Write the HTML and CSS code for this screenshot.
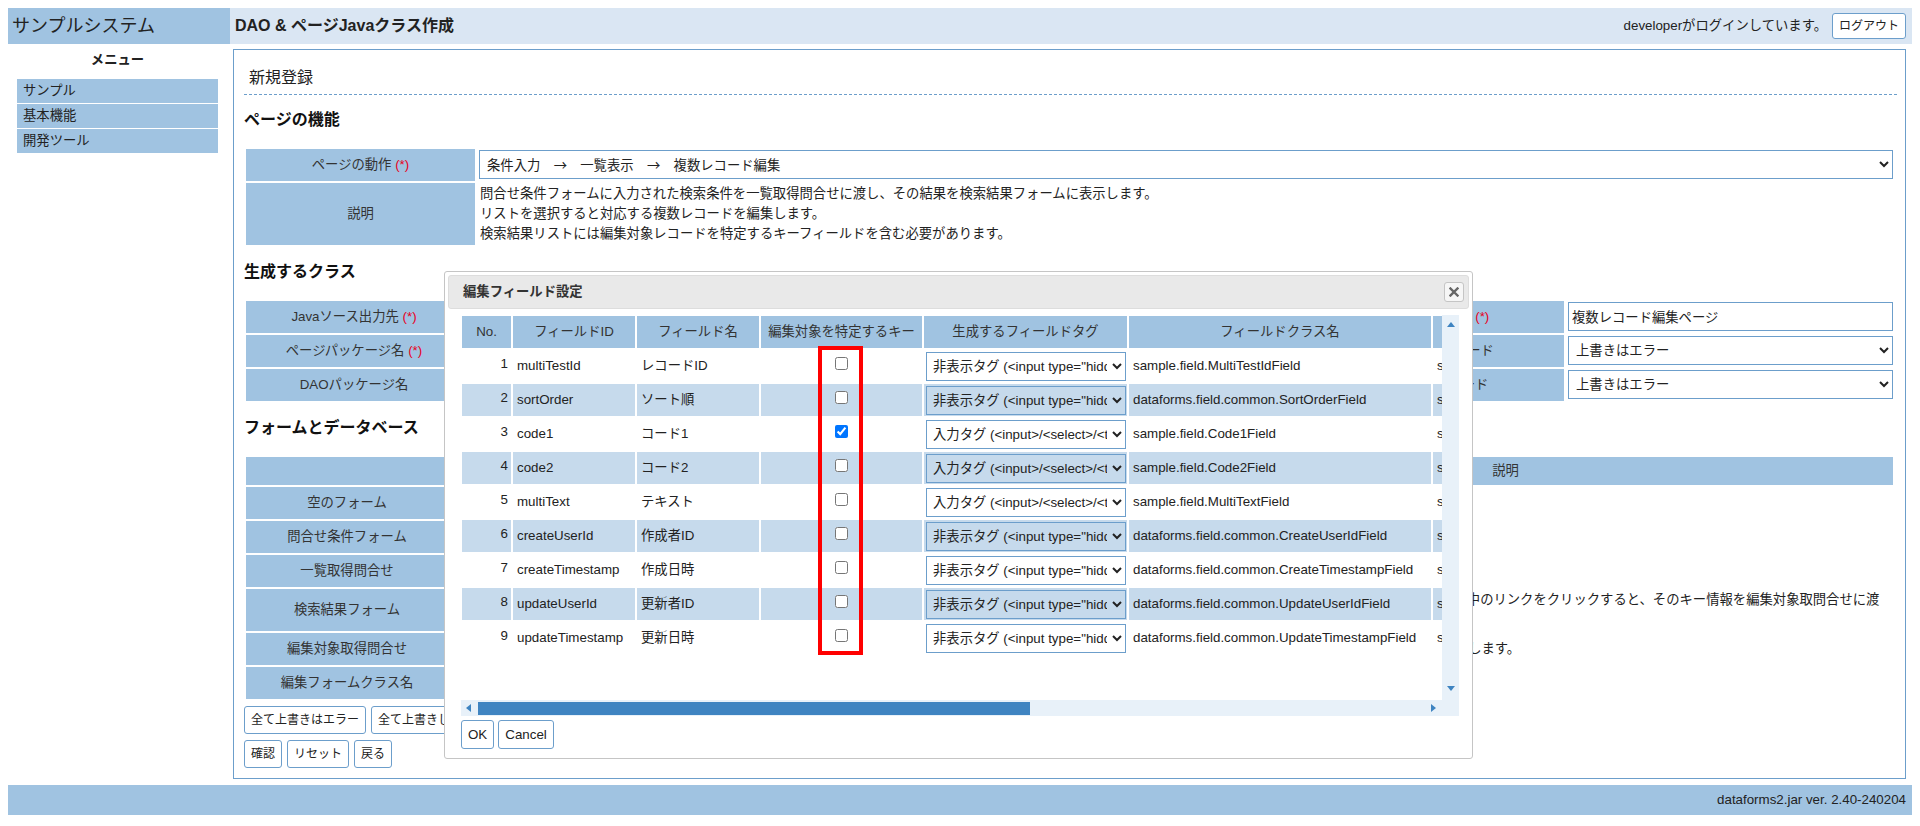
FILE: index.html
```html
<!DOCTYPE html>
<html lang="ja">
<head>
<meta charset="utf-8">
<title>DAO &amp; ページJavaクラス作成</title>
<link rel="stylesheet" href="styles.css">
</head>
<body>
<header class="top">
  <div class="sys">サンプルシステム</div>
  <div class="bar">
    <div class="page-title">DAO &amp; ページJavaクラス作成</div>
    <div class="login"><span>developerがログインしています。</span><button class="btn btn-logout">ログアウト</button></div>
  </div>
</header>

<div class="layout">
  <nav class="side">
    <div class="menu-title">メニュー</div>
    <ul class="menu">
      <li>サンプル</li>
      <li>基本機能</li>
      <li>開発ツール</li>
    </ul>
  </nav>

  <main class="main">
    <div class="form-title">新規登録</div>

    <h2>ページの機能</h2>
    <table class="ft t1">
      <colgroup><col class="w229"><col></colgroup>
      <tr>
        <th>ページの動作 <span class="req">(*)</span></th>
        <td class="v"><select class="sel sel-jp"><option>条件入力　→　一覧表示　→　複数レコード編集</option></select></td>
      </tr>
      <tr>
        <th>説明</th>
        <td class="txt">問合せ条件フォームに入力された検索条件を一覧取得問合せに渡し、その結果を検索結果フォームに表示します。<br>リストを選択すると対応する複数レコードを編集します。<br>検索結果リストには編集対象レコードを特定するキーフィールドを含む必要があります。</td>
      </tr>
    </table>

    <h2>生成するクラス</h2>
    <table class="ft t2">
      <colgroup><col class="w216"><col><col class="w260"><col class="w327"></colgroup>
      <tr>
        <th>Javaソース出力先 <span class="req">(*)</span></th>
        <td class="v"><input class="inp" type="text" value="C:/Users/developer/workspace/sample/src"></td>
        <th>ページクラス名 <span class="req">(*)</span></th>
        <td class="v"><input class="inp" type="text" value="複数レコード編集ページ"></td>
      </tr>
      <tr>
        <th>ページパッケージ名 <span class="req">(*)</span></th>
        <td class="v"><input class="inp" type="text" value="sample.page"></td>
        <th>ページ上書きモード</th>
        <td class="v"><select class="sel"><option>上書きはエラー</option></select></td>
      </tr>
      <tr>
        <th>DAOパッケージ名</th>
        <td class="v"><input class="inp" type="text" value="sample.dao"></td>
        <th>DAO上書きモード</th>
        <td class="v"><select class="sel"><option>上書きはエラー</option></select></td>
      </tr>
    </table>

    <h2>フォームとデータベース</h2>
    <table class="ft t3">
      <colgroup><col class="w202"><col class="w330"><col class="w334"><col></colgroup>
      <tr class="hd">
        <th></th><th>クラス名</th><th>テーブル</th><th>説明</th>
      </tr>
      <tr>
        <th>空のフォーム</th>
        <td class="v"><input class="inp" type="text" value=""></td>
        <td class="v"><input class="inp" type="text" value=""></td>
        <td class="desc">何も配置されていないフォームです。</td>
      </tr>
      <tr>
        <th>問合せ条件フォーム</th>
        <td class="v"><input class="inp" type="text" value="QueryForm"></td>
        <td class="v"><input class="inp" type="text" value=""></td>
        <td class="desc">問合せ条件を入力するフォームです。</td>
      </tr>
      <tr>
        <th>一覧取得問合せ</th>
        <td class="v"><input class="inp" type="text" value="MultiTestListQuery"></td>
        <td class="v"><input class="inp" type="text" value="multi_test"></td>
        <td class="desc">検索結果の一覧を取得する問合せです。</td>
      </tr>
      <tr>
        <th>検索結果フォーム</th>
        <td class="v"><input class="inp" type="text" value="QueryResultForm"></td>
        <td class="v"><input class="inp" type="text" value=""></td>
        <td class="desc">検索結果リストを表示するフォームです。検索結果リスト中のリンクをクリックすると、そのキー情報を編集対象取問合せに渡<br>します。</td>
      </tr>
      <tr>
        <th>編集対象取得問合せ</th>
        <td class="v"><input class="inp" type="text" value="MultiTestEditQuery"></td>
        <td class="v"><input class="inp" type="text" value="multi_test"></td>
        <td class="desc">検索結果フォームで選択された編集対象のレコードを取得します。</td>
      </tr>
      <tr>
        <th>編集フォームクラス名</th>
        <td class="v"><input class="inp" type="text" value="EditForm"></td>
        <td class="v"><input class="inp" type="text" value=""></td>
        <td class="desc">編集フォームのクラス名です。</td>
      </tr>
    </table>

    <div class="btns">
      <button class="btn">全て上書きはエラー</button>
      <button class="btn">全て上書きします</button>
      <button class="btn">全て上書きしない</button>
    </div>
    <div class="btns btns2">
      <button class="btn">確認</button>
      <button class="btn">リセット</button>
      <button class="btn">戻る</button>
    </div>
  </main>
</div>

<footer class="foot">dataforms2.jar ver. 2.40-240204</footer>

<div class="dlg">
  <div class="dlg-head">
    <span class="dlg-title">編集フィールド設定</span>
    <button class="dlg-close" aria-label="close">
      <svg width="10" height="10" viewBox="0 0 10 10"><path d="M1.5 1.5L8.5 8.5M8.5 1.5L1.5 8.5" stroke="#666" stroke-width="2.4" stroke-linecap="square" fill="none"/></svg>
    </button>
  </div>
  <div class="dlg-body">
    <div class="scroller">
      <div class="viewport">
        <table class="grid">
          <colgroup>
            <col class="g1"><col class="g2"><col class="g3"><col class="g4"><col class="g5"><col class="g6"><col class="g7">
          </colgroup>
          <thead>
            <tr><th>No.</th><th>フィールドID</th><th>フィールド名</th><th>編集対象を特定するキー</th><th>生成するフィールドタグ</th><th>フィールドクラス名</th><th>スーパークラス</th></tr>
          </thead>
          <tbody>
            <tr><td class="no">1</td><td>multiTestId</td><td>レコードID</td><td class="ck"><input type="checkbox"></td><td class="tg"><select class="gsel"><option>非表示タグ (&lt;input type="hidden"&gt;)</option></select></td><td>sample.field.MultiTestIdField</td><td>sample.field.MultiTestIdField</td></tr>
            <tr><td class="no">2</td><td>sortOrder</td><td>ソート順</td><td class="ck"><input type="checkbox"></td><td class="tg"><select class="gsel"><option>非表示タグ (&lt;input type="hidden"&gt;)</option></select></td><td>dataforms.field.common.SortOrderField</td><td>sample.field.SortOrderField</td></tr>
            <tr><td class="no">3</td><td>code1</td><td>コード1</td><td class="ck"><input type="checkbox" checked></td><td class="tg"><select class="gsel"><option>入力タグ (&lt;input&gt;/&lt;select&gt;/&lt;textarea&gt;)</option></select></td><td>sample.field.Code1Field</td><td>sample.field.Code1Field</td></tr>
            <tr><td class="no">4</td><td>code2</td><td>コード2</td><td class="ck"><input type="checkbox"></td><td class="tg"><select class="gsel"><option>入力タグ (&lt;input&gt;/&lt;select&gt;/&lt;textarea&gt;)</option></select></td><td>sample.field.Code2Field</td><td>sample.field.Code2Field</td></tr>
            <tr><td class="no">5</td><td>multiText</td><td>テキスト</td><td class="ck"><input type="checkbox"></td><td class="tg"><select class="gsel"><option>入力タグ (&lt;input&gt;/&lt;select&gt;/&lt;textarea&gt;)</option></select></td><td>sample.field.MultiTextField</td><td>sample.field.MultiTextField</td></tr>
            <tr><td class="no">6</td><td>createUserId</td><td>作成者ID</td><td class="ck"><input type="checkbox"></td><td class="tg"><select class="gsel"><option>非表示タグ (&lt;input type="hidden"&gt;)</option></select></td><td>dataforms.field.common.CreateUserIdField</td><td>sample.field.CreateUserIdField</td></tr>
            <tr><td class="no">7</td><td>createTimestamp</td><td>作成日時</td><td class="ck"><input type="checkbox"></td><td class="tg"><select class="gsel"><option>非表示タグ (&lt;input type="hidden"&gt;)</option></select></td><td>dataforms.field.common.CreateTimestampField</td><td>sample.field.CreateTimestampField</td></tr>
            <tr><td class="no">8</td><td>updateUserId</td><td>更新者ID</td><td class="ck"><input type="checkbox"></td><td class="tg"><select class="gsel"><option>非表示タグ (&lt;input type="hidden"&gt;)</option></select></td><td>dataforms.field.common.UpdateUserIdField</td><td>sample.field.UpdateUserIdField</td></tr>
            <tr><td class="no">9</td><td>updateTimestamp</td><td>更新日時</td><td class="ck"><input type="checkbox"></td><td class="tg"><select class="gsel"><option>非表示タグ (&lt;input type="hidden"&gt;)</option></select></td><td>dataforms.field.common.UpdateTimestampField</td><td>sample.field.UpdateTimestampField</td></tr>
          </tbody>
        </table>
        <div class="mark"></div>
      </div>
      <div class="vbar"><span class="arr arr-up"></span><span class="arr arr-down"></span></div>
      <div class="hbar"><span class="arr arr-left"></span><span class="thumb"></span><span class="arr arr-right"></span></div>
      <div class="corner"></div>
    </div>
    <div class="dlg-btns">
      <button class="btn btn-d">OK</button>
      <button class="btn btn-d">Cancel</button>
    </div>
  </div>
</div>
</body>
</html>
```

FILE: styles.css
```css
* { box-sizing: border-box; }

html { margin: 0; padding: 0; }

body {
  margin: 8px;
  font-family: "Liberation Sans", "Noto Sans CJK JP", sans-serif;
  font-size: 13.333px;
  line-height: 20px;
  color: #222;
  background: #fff;
  position: relative;
}

button, select, input {
  font-family: "Liberation Sans", "Noto Sans CJK JP", sans-serif;
  color: #222;
}

/* ---------- header ---------- */
.top {
  display: flex;
  height: 36px;
}
.sys {
  width: 222px;
  background: #a0c3e1;
  font-size: 18px;
  line-height: 36px;
  padding-left: 4px;
  color: #222;
}
.bar {
  flex: 1;
  background: #dae6f3;
  display: flex;
  align-items: center;
  justify-content: space-between;
  padding: 0 6px 0 5px;
}
.page-title {
  font-size: 16px;
  font-weight: bold;
}
.login {
  display: flex;
  align-items: center;
  gap: 5px;
}

.btn {
  font-size: 12px;
  height: 28px;
  line-height: 16px;
  padding: 0 6px;
  background: #fff;
  border: 1px solid #6c9ecb;
  border-radius: 3px;
  cursor: pointer;
}
.btn-logout { height: 26px; }

/* ---------- layout ---------- */
.layout {
  display: flex;
  align-items: flex-start;
  margin-top: 5px;
}
.side {
  width: 225px;
  flex: none;
  padding: 0 15px 0 9px;
}
.menu-title {
  text-align: center;
  font-weight: bold;
  margin-top: 1px;
}
.menu {
  list-style: none;
  margin: 9px 0 0;
  padding: 0;
}
.menu li {
  height: 24px;
  line-height: 24px;
  padding-left: 6px;
  background: #a0c3e1;
  margin-bottom: 1px;
}

.main {
  flex: 1;
  margin-right: 6px;
  border: 1px solid #6c9ecb;
  padding: 0 10px 10px 10px;
}
.form-title {
  font-size: 16px;
  line-height: 18px;
  padding: 19px 0 7px 5px;
  margin-right: -2px;
  border-bottom: 1px dashed #6c9ecb;
}
h2 {
  font-size: 16px;
  line-height: 20px;
  font-weight: bold;
  margin: 15px 0 17px;
  color: #111;
}

/* ---------- form tables ---------- */
.ft {
  width: 100%;
  table-layout: fixed;
  border-spacing: 2px;
  margin: 0;
}
.w229 { width: 229px; }
.w216 { width: 216px; }
.w260 { width: 260px; }
.w327 { width: 327px; }
.w202 { width: 202px; }
.w330 { width: 330px; }
.w334 { width: 334px; }

.ft th {
  background: #a0c3e1;
  font-weight: normal;
  color: #333;
  text-align: center;
  padding: 0 4px;
  white-space: nowrap;
  overflow: hidden;
}
.ft td.v {
  padding: 1px 0 2px 2px;
}
.ft td.txt {
  padding: 1px 3px;
}
.ft td.desc {
  padding: 1px 4px;
  white-space: nowrap;
  overflow: hidden;
}
.t3 tr.hd th {
  height: 28px;
}
.req { color: #e8001c; }

.sel, .inp {
  display: block;
  width: 100%;
  height: 29px;
  margin: 0;
  border: 1px solid #6c9ecb;
  border-radius: 0;
  background: #fff;
  font-size: 13.333px;
  padding: 0 3px;
}
.sel-jp {
  font-family: "Noto Sans CJK JP", sans-serif;
}

.btns {
  display: flex;
  gap: 5px;
  margin-top: 5px;
}
.btns2 { margin-top: 6px; }

/* ---------- footer ---------- */
.foot {
  margin-top: 6px;
  height: 30px;
  line-height: 30px;
  background: #a0c3e1;
  text-align: right;
  padding-right: 6px;
}

/* ---------- dialog ---------- */
.dlg {
  position: absolute;
  left: 436px;
  top: 263px;
  width: 1029px;
  height: 488px;
  background: #fff;
  border: 1px solid #c5c5c5;
  border-radius: 3px;
  padding: 3px;
  z-index: 10;
}
.dlg-head {
  height: 34px;
  background: #e9e9e9;
  border: 1px solid #dddddd;
  border-radius: 3px;
  display: flex;
  align-items: center;
  justify-content: space-between;
  padding: 0 4px 0 14px;
}
.dlg-title {
  font-weight: bold;
  color: #333;
}
.dlg-close {
  width: 20px;
  height: 20px;
  padding: 0;
  background: #f6f6f6;
  border: 1px solid #c5c5c5;
  border-radius: 3px;
  display: flex;
  align-items: center;
  justify-content: center;
}
.dlg-body {
  padding: 6px 0 0 13px;
}
.scroller {
  display: grid;
  grid-template-columns: 981px 17px;
  grid-template-rows: 385px 16px;
  width: 998px;
}
.viewport {
  position: relative;
  overflow: hidden;
}
.grid {
  table-layout: fixed;
  border-spacing: 0;
  width: 1330px;
}
.g1 { width: 51px; }
.g2 { width: 124px; }
.g3 { width: 124px; }
.g4 { width: 163px; }
.g5 { width: 205px; }
.g6 { width: 304px; }
.g7 { width: 359px; }

.grid th, .grid td {
  height: 34px;
  border: 1px solid #fff;
  padding: 0 4px;
  white-space: nowrap;
  overflow: hidden;
  vertical-align: middle;
}
.grid th {
  background: #a0c3e1;
  font-weight: normal;
  color: #333;
  text-align: center;
}
.grid tbody tr:nth-child(even) td {
  background: #c6daec;
}
.grid td.no {
  text-align: right;
  padding-right: 3px;
  vertical-align: top;
  padding-top: 4px;
}
.grid td.ck {
  text-align: center;
  padding: 0;
}
.grid td.ck input {
  margin: 0 0 6px;
  vertical-align: middle;
}
.grid td.tg {
  padding: 0 1px 0 2px;
}
.gsel {
  display: block;
  width: 100%;
  height: 29px;
  margin: 0;
  border: 1px solid #6c9ecb;
  border-radius: 0;
  background: transparent;
  font-size: 13.333px;
  padding: 0 2px;
}

.mark {
  position: absolute;
  left: 357px;
  top: 31px;
  width: 45px;
  height: 309px;
  border: 4px solid #ff0000;
}

.vbar {
  background: #e8f1f9;
  display: flex;
  flex-direction: column;
  justify-content: space-between;
  align-items: center;
  padding: 7px 0 9px;
}
.hbar {
  background: #e8f1f9;
  display: flex;
  align-items: center;
  padding: 0 6px 0 5px;
}
.corner { background: #e8f1f9; }
.thumb {
  height: 13px;
  width: 552px;
  background: #3f84c1;
  margin-left: 7px;
  margin-right: auto;
}
.arr {
  display: block;
  width: 0;
  height: 0;
  border-style: solid;
}
.arr-up { border-width: 0 4px 5px; border-color: transparent transparent #3f84c1; }
.arr-down { border-width: 5px 4px 0; border-color: #3f84c1 transparent transparent; }
.arr-left { border-width: 4px 5px 4px 0; border-color: transparent #3f84c1 transparent transparent; }
.arr-right { border-width: 4px 0 4px 5px; border-color: transparent transparent transparent #3f84c1; }

.dlg-btns {
  display: flex;
  gap: 4px;
  margin-top: 4px;
}
.btn-d {
  font-size: 13.333px;
  height: 29px;
}
```
